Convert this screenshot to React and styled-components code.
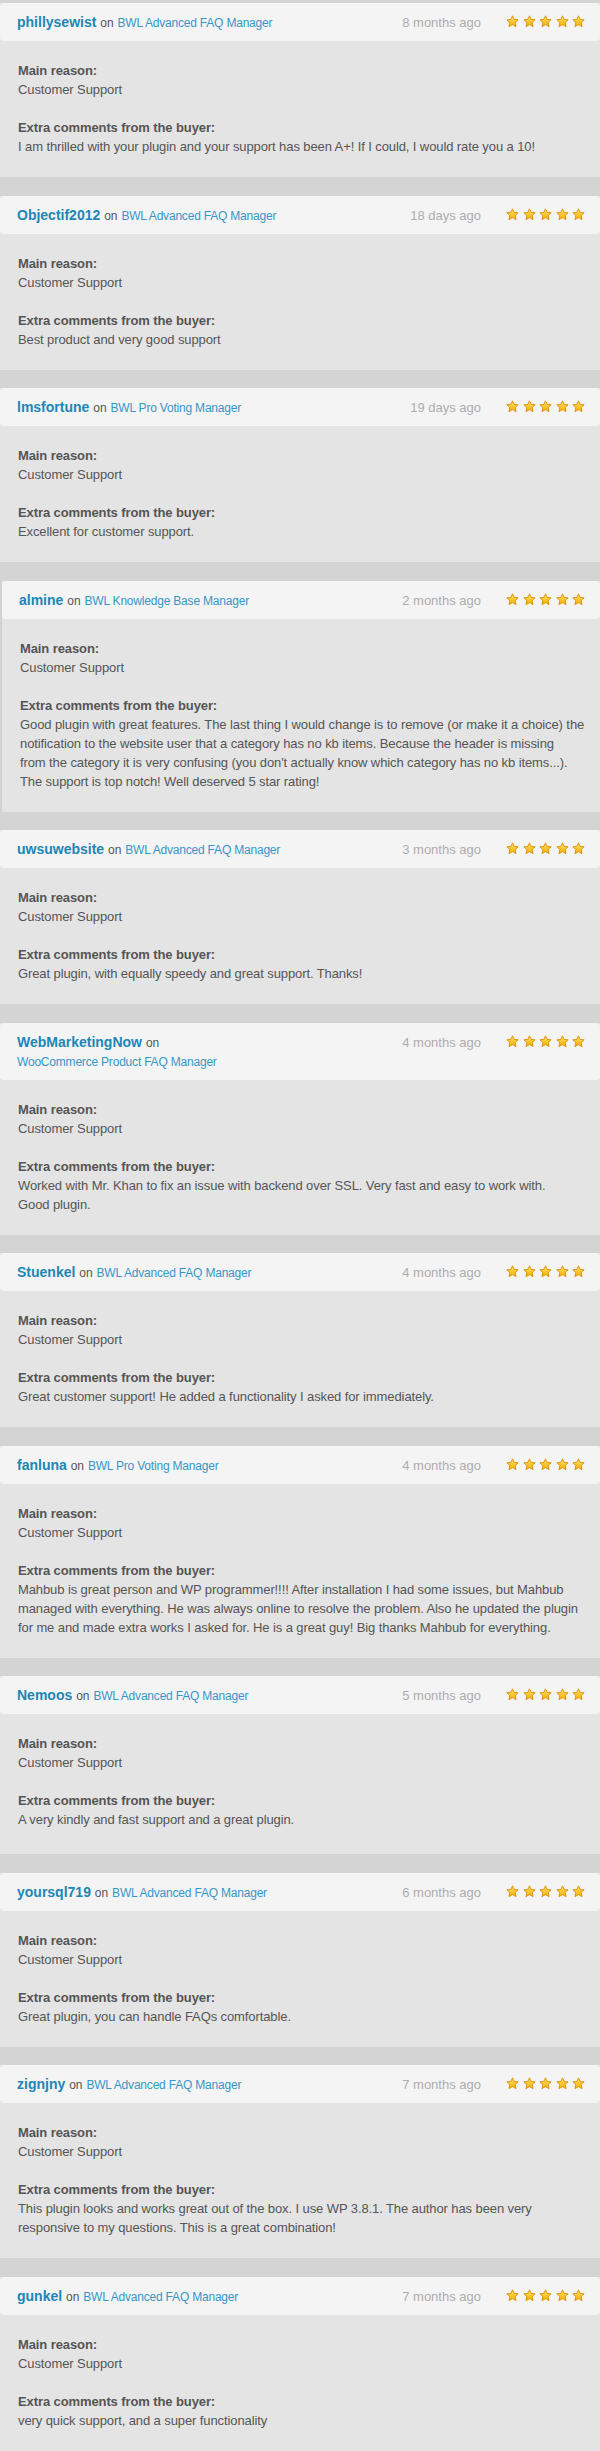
import React from 'react';
import styled, { createGlobalStyle, css } from 'styled-components';

const reviews = [
  {
    user: 'phillysewist',
    product: 'BWL Advanced FAQ Manager',
    time: '8 months ago',
    comment: [
      'I am thrilled with your plugin and your support has been A+! If I could, I would rate you a 10!',
    ],
  },
  {
    user: 'Objectif2012',
    product: 'BWL Advanced FAQ Manager',
    time: '18 days ago',
    comment: ['Best product and very good support'],
  },
  {
    user: 'lmsfortune',
    product: 'BWL Pro Voting Manager',
    time: '19 days ago',
    comment: ['Excellent for customer support.'],
  },
  {
    user: 'almine',
    product: 'BWL Knowledge Base Manager',
    time: '2 months ago',
    bordered: true,
    comment: [
      'Good plugin with great features. The last thing I would change is to remove (or make it a choice) the',
      'notification to the website user that a category has no kb items. Because the header is missing',
      "from the category it is very confusing (you don't actually know which category has no kb items...).",
      'The support is top notch! Well deserved 5 star rating!',
    ],
  },
  {
    user: 'uwsuwebsite',
    product: 'BWL Advanced FAQ Manager',
    time: '3 months ago',
    comment: ['Great plugin, with equally speedy and great support. Thanks!'],
  },
  {
    user: 'WebMarketingNow',
    product: 'WooCommerce Product FAQ Manager',
    time: '4 months ago',
    comment: [
      'Worked with Mr. Khan to fix an issue with backend over SSL. Very fast and easy to work with.',
      'Good plugin.',
    ],
  },
  {
    user: 'Stuenkel',
    product: 'BWL Advanced FAQ Manager',
    time: '4 months ago',
    comment: ['Great customer support! He added a functionality I asked for immediately.'],
  },
  {
    user: 'fanluna',
    product: 'BWL Pro Voting Manager',
    time: '4 months ago',
    comment: [
      'Mahbub is great person and WP programmer!!!! After installation I had some issues, but Mahbub',
      'managed with everything. He was always online to resolve the problem. Also he updated the plugin',
      'for me and made extra works I asked for. He is a great guy! Big thanks Mahbub for everything.',
    ],
  },
  {
    user: 'Nemoos',
    product: 'BWL Advanced FAQ Manager',
    time: '5 months ago',
    tail: 4,
    comment: ['A very kindly and fast support and a great plugin.'],
  },
  {
    user: 'yoursql719',
    product: 'BWL Advanced FAQ Manager',
    time: '6 months ago',
    comment: ['Great plugin, you can handle FAQs comfortable.'],
  },
  {
    user: 'zignjny',
    product: 'BWL Advanced FAQ Manager',
    time: '7 months ago',
    comment: [
      'This plugin looks and works great out of the box. I use WP 3.8.1. The author has been very',
      'responsive to my questions. This is a great combination!',
    ],
  },
  {
    user: 'gunkel',
    product: 'BWL Advanced FAQ Manager',
    time: '7 months ago',
    comment: ['very quick support, and a super functionality'],
  },
];

const Star = () => (
  <svg width="13" height="13" viewBox="0 0 24 24">
    <defs>
      <linearGradient id="starFill" x1="0" y1="0" x2="0" y2="1">
        <stop offset="0" stopColor="#ffe36b" />
        <stop offset="1" stopColor="#f5ad00" />
      </linearGradient>
    </defs>
    <polygon
      points="12,1.5 15.1,8.1 22.4,8.9 17,13.9 18.5,21.6 12,17.6 5.5,21.6 7,13.9 1.6,8.9 8.9,8.1"
      fill="url(#starFill)"
      stroke="#d88c00"
      strokeWidth="1.6"
      strokeLinejoin="round"
    />
  </svg>
);

const ReviewCard = ({ user, product, time, comment, bordered, tail = 0 }) => {
  return (
    <Card $bordered={bordered}>
      <Header>
        <Author>
          <User href="#">{user}</User> <On>on</On> <Product href="#">{product}</Product>
        </Author>
        <Time>{time}</Time>
        <Stars>
          {[0, 1, 2, 3, 4].map((i) => (
            <Star key={i} />
          ))}
        </Stars>
      </Header>
      <Body $tail={tail}>
        <Section>
          <Label>Main reason:</Label>
          <Line>Customer Support</Line>
        </Section>
        <Section>
          <Label>Extra comments from the buyer:</Label>
          {comment.map((line, index) => (
            <Line key={index}>{line}</Line>
          ))}
        </Section>
      </Body>
    </Card>
  );
};

const App = () => {
  return (
    <>
      <GlobalStyle />
      <List>
        {reviews.map((review) => (
          <ReviewCard key={review.user} {...review} />
        ))}
      </List>
    </>
  );
};

const GlobalStyle = createGlobalStyle`
  html, body {
    margin: 0;
    padding: 0;
    background: #e4e4e4;
  }
  body {
    font-family: "Liberation Sans", Arial, sans-serif;
  }
`;

const List = styled.main`
  display: flex;
  flex-direction: column;
  gap: 18.5px;
  padding-top: 3px;
  background: #d4d4d4;
`;

const Card = styled.article`
  background: #e4e4e4;
  ${(p) =>
    p.$bordered &&
    css`
      border-left: 2px solid #d2d2d2;
    `}
`;

const Header = styled.header`
  display: flex;
  align-items: flex-start;
  padding: 10px 15px 9px 17px;
  background: #f4f4f4;
  border-radius: 4px;
  line-height: 19px;
`;

const Author = styled.div`
  max-width: 300px;
  font-size: 14px;
  line-height: 19px;
`;

const User = styled.a`
  font-weight: bold;
  color: #2086b7;
  text-decoration: none;
`;

const On = styled.span`
  font-size: 12px;
  line-height: 12px;
  color: #555;
`;

const Product = styled.a`
  font-size: 12px;
  line-height: 12px;
  color: #3796c8;
  text-decoration: none;
  white-space: nowrap;
  letter-spacing: -0.2px;
`;

const Time = styled.span`
  margin-left: auto;
  font-size: 13px;
  color: #adadad;
`;

const Stars = styled.div`
  display: flex;
  gap: 3.5px;
  margin-left: 25px;
  margin-top: 2px;
`;

const Body = styled.div`
  display: flex;
  flex-direction: column;
  gap: 19px;
  padding: 20px 18px ${(p) => 21 + p.$tail}px;
  font-size: 13px;
  line-height: 19px;
  letter-spacing: -0.1px;
  color: #555;
`;

const Section = styled.div``;

const Label = styled.div`
  font-weight: bold;
`;

const Line = styled.div`
  white-space: nowrap;
`;

export default App;
